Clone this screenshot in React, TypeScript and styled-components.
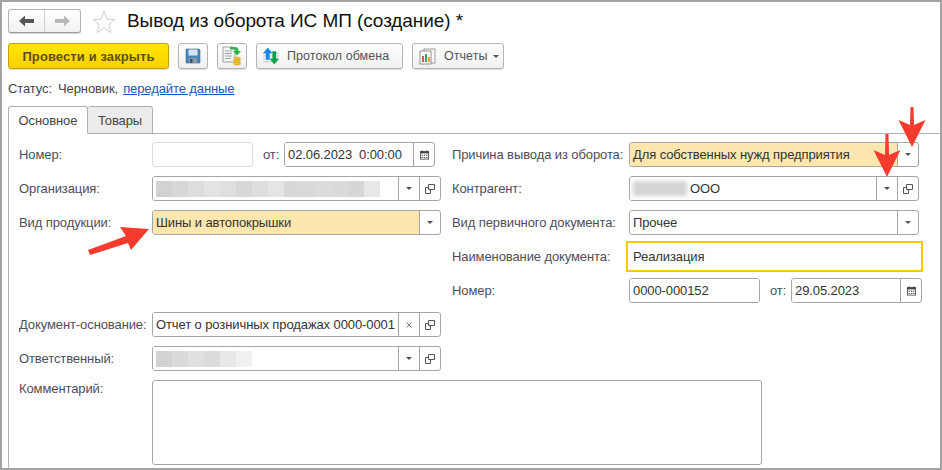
import * as React from 'react';
import styled, { createGlobalStyle } from 'styled-components';

const GlobalStyle = createGlobalStyle`
  html, body {
    margin: 0;
    padding: 0;
    background: #fff;
  }
  * {
    box-sizing: border-box;
  }
`;

const Frame = styled.div`
  position: relative;
  width: 942px;
  height: 470px;
  overflow: hidden;
  padding: 7px 0 0 6px;
  background: #fff;
  border: 2px solid #a3a3a3;
  font-family: "Liberation Sans", Arial, sans-serif;
  font-size: 13px;
  letter-spacing: -.1px;
  color: #333;
`;

const Header = styled.div`
  display: flex;
  align-items: center;
  height: 24px;
`;

const NavGroup = styled.div`
  display: flex;
  width: 73px;
  height: 24px;
  border: 1px solid #b5b5b5;
  border-bottom-color: #9c9c9c;
  border-radius: 3px;
  background: linear-gradient(#fff, #f1f1f1);
  box-shadow: 0 1px 1px rgba(0, 0, 0, .18);
`;

const NavCell = styled.div<{ $divided?: boolean }>`
  flex: 1;
  display: flex;
  align-items: center;
  justify-content: center;
  border-left: ${(p) => (p.$divided ? '1px solid #d0d0d0' : 'none')};
`;

const StarBox = styled.div`
  display: flex;
  margin-left: 11px;
`;

const Title = styled.h1`
  margin: 0 0 0 11px;
  font-size: 19px;
  font-weight: 400;
  letter-spacing: -.08px;
  color: #111;
  white-space: nowrap;
`;

const Toolbar = styled.div`
  display: flex;
  gap: 9px;
  margin-top: 10px;
`;

const ToolButton = styled.button<{ $width: number }>`
  display: flex;
  align-items: center;
  justify-content: center;
  width: ${(p) => p.$width}px;
  height: 26px;
  padding: 0;
  border: 1px solid #b5b5b5;
  border-radius: 3px;
  background: linear-gradient(#fff, #f0f0f0);
  box-shadow: 0 1px 1px rgba(0, 0, 0, .15);
  font-family: inherit;
  font-size: 12.5px;
  letter-spacing: .05px;
  color: #555;
`;

const LabeledButton = styled(ToolButton)`
  justify-content: flex-start;
  gap: 8px;
  padding-left: 6px;
`;

const ButtonCaret = styled.span`
  display: flex;
  margin-left: -3px;
`;

const PrimaryButton = styled(ToolButton)`
  border-color: #c6a100;
  background: linear-gradient(#ffe600, #fdd000);
  font-weight: 700;
  font-size: 13px;
  letter-spacing: .1px;
  color: #5d5015;
`;

const Status = styled.div`
  display: flex;
  align-items: center;
  height: 16px;
  margin-top: 11px;
  color: #444;
`;

const StatusValue = styled.span`
  margin-left: 6px;
`;

const StatusLink = styled.a`
  margin-left: 5px;
  color: #0b5cc4;
  text-decoration: underline;
`;

const Tabs = styled.div`
  display: flex;
  height: 28px;
  margin-top: 10px;
  margin-bottom: -1px;
`;

const Tab = styled.div<{ $active?: boolean; $width: number }>`
  position: relative;
  z-index: 1;
  display: flex;
  align-items: center;
  justify-content: center;
  width: ${(p) => p.$width}px;
  border: 1px solid #b0b0b0;
  border-left-width: ${(p) => (p.$active ? 1 : 0)}px;
  border-bottom-color: ${(p) => (p.$active ? '#fff' : '#b0b0b0')};
  border-radius: 3px 3px 0 0;
  background: ${(p) => (p.$active ? '#fff' : '#ececec')};
  color: #444;
`;

const Panel = styled.div`
  height: 340px;
  padding: 8px 0 0 10px;
  border-top: 1px solid #b0b0b0;
  border-left: 1px solid #b0b0b0;
`;

const Columns = styled.div`
  display: grid;
  grid-template-columns: 422px 472px;
  column-gap: 11px;
`;

const Column = styled.div`
  display: flex;
  flex-direction: column;
  align-items: flex-start;
`;

const Row = styled.div<{ $top?: number; $height?: number }>`
  display: flex;
  align-items: center;
  height: ${(p) => p.$height ?? 25}px;
  margin-top: ${(p) => p.$top ?? 0}px;
`;

const Label = styled.div<{ $width: number }>`
  flex: none;
  width: ${(p) => p.$width}px;
  color: #4d4d5a;
  white-space: nowrap;
`;

const Between = styled.div<{ $width: number }>`
  flex: none;
  width: ${(p) => p.$width}px;
  padding-left: 10px;
  color: #4d4d5a;
`;

const Field = styled.div<{ $width: number; $tone?: 'filled' | 'muted' }>`
  display: flex;
  flex: none;
  width: ${(p) => p.$width}px;
  height: 25px;
  overflow: hidden;
  border: 1px solid ${(p) => (p.$tone === 'muted' ? '#dcdcdc' : '#a6a6a6')};
  border-radius: 3px;
  background: #fff;
`;

const FieldText = styled.div<{ $tone?: 'filled' }>`
  flex: 1;
  display: flex;
  align-items: center;
  min-width: 0;
  padding-left: 3px;
  background: ${(p) => (p.$tone === 'filled' ? '#fde7ae' : '#fff')};
  color: #333;
  white-space: pre;
  overflow: hidden;
`;

const FieldButton = styled.div`
  flex: none;
  display: flex;
  align-items: center;
  justify-content: center;
  width: 21px;
  border-left: 1px solid #a6a6a6;
`;

const CurrentField = styled.div`
  display: flex;
  align-items: center;
  width: 297px;
  height: 31px;
  padding-left: 5px;
  border: 2px solid #fdc800;
  color: #333;
`;

const CommentBox = styled.div`
  width: 610px;
  height: 85px;
  border: 1px solid #a6a6a6;
  border-radius: 3px;
`;

const CommentRow = styled.div`
  display: flex;
  margin-top: 9px;
`;

const CommentLabel = styled(Label)`
  padding-top: 1px;
`;

const Smudges = styled.div`
  display: flex;
  height: 16px;
`;

const Smudge = styled.div<{ $shade: string }>`
  width: 16px;
  height: 16px;
  background: ${(p) => p.$shade};
`;

const BlurredName = styled.div`
  width: 54px;
  height: 15px;
  margin-right: 3px;
  background: #d4d4d4;
  filter: blur(2px);
`;

const Arrow = styled.svg<{ $left: number; $top: number }>`
  position: absolute;
  left: ${(p) => p.$left}px;
  top: ${(p) => p.$top}px;
`;

const orgShades = ['#d4d1d2', '#d9d6d7', '#dedcdd', '#e3e3e5', '#e0dfe0', '#d9d7d8', '#dedede', '#e4e5e7', '#d9d8d9', '#d9d9d9', '#dcdcdc', '#dadada', '#d6d6d6', '#e8e8e8'];
const personShades = ['#d2d2d2', '#dadada', '#e0e0e0', '#dbdbdb', '#e8e8e8', '#f1f1f1'];

const BackIcon = ({ color, flip }: { color: string; flip?: boolean }) => (
  <svg width="15" height="12" viewBox="0 0 15 12" style={flip ? { transform: 'scaleX(-1)' } : undefined}>
    <path d="M0 6 6 .5V4h9v4H6v3.500z" fill={color} />
  </svg>
);

const StarIcon = () => (
  <svg width="24" height="23" viewBox="0 0 24 23">
    <path d="M12 1.500l3 7.600 8 .5-6.200 5.100 2 7.800L12 18.200 5.200 22.500l2-7.800L1 9.600l8-.5z" fill="#fff" stroke="#c9ced3" strokeWidth="1" />
  </svg>
);

const SaveIcon = () => (
  <svg width="16" height="16" viewBox="0 0 16 16">
    <path d="M1 1h13l1 1v13H1z" fill="#4a86b8" stroke="#3a6d98" strokeWidth=".6" />
    <rect x="3.500" y="1.500" width="9" height="6" fill="#d9e6f0" />
    <rect x="4" y="10" width="8" height="5" fill="#8a9aa8" />
    <rect x="5" y="11" width="2.500" height="4" fill="#2f5877" />
  </svg>
);

const PostIcon = () => (
  <svg width="20" height="20" viewBox="0 0 20 20">
    <path d="M1 1h10l2 2v13H1z" fill="#f6f6f6" stroke="#8b8b8b" strokeWidth=".8" />
    <path d="M3 5h7M3 7.500h7M3 10h7M3 12.500h6" stroke="#9aa3a8" strokeWidth="1" />
    <path d="M8 1h5c2.500 0 3.500 1.500 3.500 4h2.500l-4 4.500-4-4.500h2.500c0-1-.5-1.500-1.500-1.500H8z" fill="#2eb34a" />
    <ellipse cx="15" cy="12.500" rx="3.500" ry="1.500" fill="#f1c232" stroke="#c9971a" strokeWidth=".5" />
    <ellipse cx="15" cy="15" rx="3.500" ry="1.500" fill="#f1c232" stroke="#c9971a" strokeWidth=".5" />
    <ellipse cx="15" cy="17.500" rx="3.500" ry="1.500" fill="#f1c232" stroke="#c9971a" strokeWidth=".5" />
  </svg>
);

const ExchangeIcon = () => (
  <svg width="16" height="18" viewBox="0 0 17 18">
    <path d="M0 6h17M0 9h17M0 12h17M0 15h10" stroke="#b9c4cc" strokeWidth="1" />
    <path d="M5 0l5 6H7v7H3V6H0z" fill="#1589e8" />
    <path d="M12 18l-5-6h3V4h4v8h3z" fill="#11a04a" />
  </svg>
);

const ReportIcon = () => (
  <svg width="17" height="17" viewBox="0 0 17 17">
    <rect x="5" y="1" width="11" height="14" fill="#f7f7f7" stroke="#8a8a8a" strokeWidth=".8" />
    <rect x="1" y="3" width="11" height="13" fill="#fff" stroke="#777" strokeWidth=".8" />
    <rect x="3" y="8" width="2" height="6" fill="#d9534f" />
    <rect x="6" y="6" width="2" height="8" fill="#3ea055" />
    <rect x="9" y="9" width="2" height="5" fill="#e0a030" />
  </svg>
);

const Caret = () => (
  <svg width="6" height="3" viewBox="0 0 6 3">
    <path d="M0 0h6L3 3z" fill="#555" />
  </svg>
);

const OpenIcon = () => (
  <svg width="10" height="10" viewBox="0 0 10 10">
    <path d="M3.500 .5h6v5h-6zM3.500 3.500H.5v6h5V5.500" fill="none" stroke="#555" strokeWidth="1" />
  </svg>
);

const ClearIcon = () => (
  <svg width="6" height="6" viewBox="0 0 7 7">
    <path d="M.5.5l6 6M6.500.5l-6 6" stroke="#777" strokeWidth="1.100" />
  </svg>
);

const CalendarIcon = () => (
  <svg width="9" height="10" viewBox="0 0 11 11">
    <path d="M2 0h1.500v2H2zM7.500 0H9v2H7.500z" fill="#444" />
    <rect x=".5" y="1.500" width="10" height="9" fill="#fff" stroke="#444" />
    <rect x="0" y="1" width="11" height="2.500" fill="#444" />
    <path d="M2 5h1.500v1.500H2zM4.800 5h1.500v1.500H4.800zM7.500 5H9v1.500H7.500zM2 7.800h1.500v1.500H2zM4.800 7.800h1.500v1.500H4.800zM7.500 7.800H9v1.500H7.500z" fill="#444" />
  </svg>
);

const ArrowDown = ({ left, top, length }: { left: number; top: number; length: number }) => (
  <Arrow $left={left} $top={top} width="28" height={length} viewBox={`0 0 28 ${length}`}>
    <path
      d={`M12.500 0h3l.5 ${length - 22}L27.500 ${length - 27}L14 ${length}L.5 ${length - 27}L12 ${length - 22}z`}
      fill="#f53b2d"
    />
  </Arrow>
);

const ArrowDiagonal = () => (
  <Arrow $left={84} $top={222} width="66" height="34" viewBox="0 0 66 34">
    <path d="M2 26L40 12 34 3 63 5 45 26 42 19 4 31z" fill="#f53b2d" />
  </Arrow>
);

const LinkedField = ({ children, width, tone, clear }: { children: React.ReactNode; width: number; tone?: 'filled'; clear?: boolean }) => (
  <Field $width={width}>
    <FieldText $tone={tone}>{children}</FieldText>
    <FieldButton>{clear ? <ClearIcon /> : <Caret />}</FieldButton>
    <FieldButton><OpenIcon /></FieldButton>
  </Field>
);

const SelectField = ({ children, width, tone }: { children: React.ReactNode; width: number; tone?: 'filled' }) => (
  <Field $width={width}>
    <FieldText $tone={tone}>{children}</FieldText>
    <FieldButton><Caret /></FieldButton>
  </Field>
);

const DateField = ({ value, width }: { value: string; width: number }) => (
  <Field $width={width}>
    <FieldText>{value}</FieldText>
    <FieldButton><CalendarIcon /></FieldButton>
  </Field>
);

export default function App() {
  return (
    <Frame>
      <GlobalStyle />
      <Header>
        <NavGroup>
          <NavCell><BackIcon color="#555" /></NavCell>
          <NavCell $divided><BackIcon color="#b7b7b7" flip /></NavCell>
        </NavGroup>
        <StarBox><StarIcon /></StarBox>
        <Title>Вывод из оборота ИС МП (создание) *</Title>
      </Header>
      <Toolbar>
        <PrimaryButton $width={161}>Провести и закрыть</PrimaryButton>
        <ToolButton $width={30}><SaveIcon /></ToolButton>
        <ToolButton $width={30}><PostIcon /></ToolButton>
        <LabeledButton $width={147}><ExchangeIcon />Протокол обмена</LabeledButton>
        <LabeledButton $width={92}><ReportIcon />Отчеты<ButtonCaret><Caret /></ButtonCaret></LabeledButton>
      </Toolbar>
      <Status>
        Статус:
        <StatusValue>Черновик,</StatusValue>
        <StatusLink>передайте данные</StatusLink>
      </Status>
      <Tabs>
        <Tab $active $width={80}>Основное</Tab>
        <Tab $width={65}>Товары</Tab>
      </Tabs>
      <Panel>
        <Columns>
          <Column>
            <Row>
              <Label $width={133}>Номер:</Label>
              <Field $width={101} $tone="muted" />
              <Between $width={31}>от:</Between>
              <DateField value="02.06.2023  0:00:00" width={151} />
            </Row>
            <Row $top={9}>
              <Label $width={133}>Организация:</Label>
              <LinkedField width={289}>
                <Smudges>
                  {orgShades.map((shade, i) => <Smudge key={i} $shade={shade} />)}
                </Smudges>
              </LinkedField>
            </Row>
            <Row $top={9}>
              <Label $width={133}>Вид продукции:</Label>
              <SelectField width={289} tone="filled">Шины и автопокрышки</SelectField>
            </Row>
          </Column>
          <Column>
            <Row>
              <Label $width={177}>Причина вывода из оборота:</Label>
              <SelectField width={290} tone="filled">Для собственных нужд предприятия</SelectField>
            </Row>
            <Row $top={9}>
              <Label $width={177}>Контрагент:</Label>
              <LinkedField width={290}><BlurredName />ООО</LinkedField>
            </Row>
            <Row $top={9}>
              <Label $width={177}>Вид первичного документа:</Label>
              <SelectField width={290}>Прочее</SelectField>
            </Row>
            <Row $top={6} $height={31}>
              <Label $width={174}>Наименование документа:</Label>
              <CurrentField>Реализация</CurrentField>
            </Row>
            <Row $top={6}>
              <Label $width={177}>Номер:</Label>
              <Field $width={131}><FieldText>0000-000152</FieldText></Field>
              <Between $width={31}>от:</Between>
              <DateField value="29.05.2023" width={131} />
            </Row>
          </Column>
        </Columns>
        <Row $top={9}>
          <Label $width={133}>Документ-основание:</Label>
          <LinkedField width={289} clear>Отчет о розничных продажах 0000-0001</LinkedField>
        </Row>
        <Row $top={9}>
          <Label $width={133}>Ответственный:</Label>
          <LinkedField width={289}>
            <Smudges>
              {personShades.map((shade, i) => <Smudge key={i} $shade={shade} />)}
            </Smudges>
          </LinkedField>
        </Row>
        <CommentRow>
          <CommentLabel $width={133}>Комментарий:</CommentLabel>
          <CommentBox />
        </CommentRow>
      </Panel>
      <ArrowDiagonal />
      <ArrowDown left={871} top={132} length={43} />
      <ArrowDown left={896} top={105} length={40} />
    </Frame>
  );
}
